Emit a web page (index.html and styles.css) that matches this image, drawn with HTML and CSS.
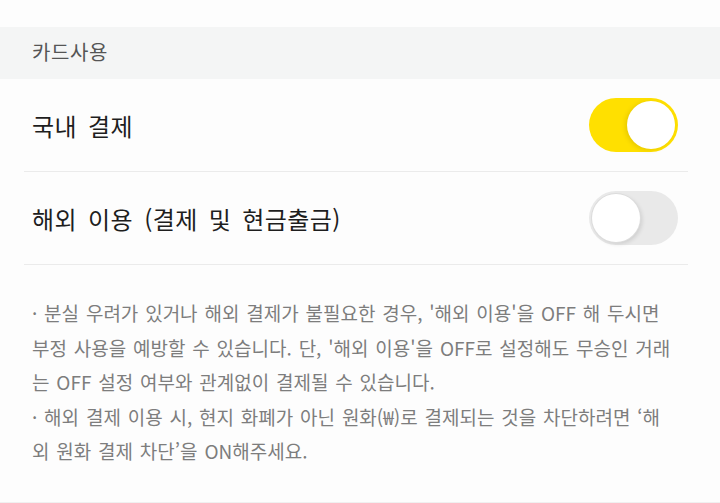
FILE: index.html
```html
<!DOCTYPE html>
<html lang="ko">
<head>
    <meta charset="UTF-8">
    <title>카드사용 설정</title>
    <link rel="stylesheet" href="styles.css">
</head>
<body>
    <div class="screen">
        <div class="section-title">카드사용</div>

        <ul class="setting-list">
            <li class="setting-row">
                <span class="setting-label">국내 결제</span>
                <span class="toggle is-on"><span class="knob"></span></span>
            </li>
            <li class="setting-row">
                <span class="setting-label">해외 이용 (결제 및 현금출금)</span>
                <span class="toggle"><span class="knob"></span></span>
            </li>
        </ul>

        <!-- 안내 문구 -->
        <div class="notice">
            <p>· 분실 우려가 있거나 해외 결제가 불필요한 경우, '해외 이용'을 OFF 해 두시면<br>부정 사용을 예방할 수 있습니다. 단, '해외 이용'을 OFF로 설정해도 무승인 거래<br>는 OFF 설정 여부와 관계없이 결제될 수 있습니다.</p>
            <p>· 해외 결제 이용 시, 현지 화폐가 아닌 원화(₩)로 결제되는 것을 차단하려면 ‘해<br>외 원화 결제 차단’을 ON해주세요.</p>
        </div>
    </div>
</body>
</html>
```

FILE: styles.css
```css
body {
    margin: 0;
    background: #fdfdfd;
    font-family: "Noto Sans CJK KR", "Noto Sans", sans-serif;
}

.screen {
    width: 720px;
    height: 503px;
    padding-top: 27px;
    box-sizing: border-box;
    border-bottom: 1px solid #f0f0f0;
    overflow: hidden;
}

.section-title {
    height: 52px;
    padding-left: 32px;
    background: #f4f5f5;
    color: #555;
    font-size: 20px;
    letter-spacing: 0.6px;
    line-height: 50px;
}

.setting-list {
    list-style: none;
    margin: 0 32px 0 24px;
    padding: 0;
}

.setting-row {
    display: flex;
    align-items: center;
    justify-content: space-between;
    height: 92px;
    padding: 0 10px 0 8px;
    border-bottom: 1px solid #ebebeb;
}

.setting-label {
    font-size: 24px;
    color: #1e1e1e;
    word-spacing: 4px;
    letter-spacing: 0.4px;
}

.toggle {
    display: flex;
    align-items: center;
    width: 89px;
    height: 54px;
    padding: 0 3px;
    box-sizing: border-box;
    border-radius: 27px;
    background: #e9e9e9;
}

.toggle .knob {
    width: 48px;
    height: 48px;
    border-radius: 50%;
    background: #fff;
    box-shadow: 0 0 0 1px #dcdcdc, 2px 2px 4px rgba(0, 0, 0, 0.12);
}

.toggle.is-on {
    justify-content: flex-end;
    background: #ffe000;
}

.toggle.is-on .knob {
    box-shadow: -2px 1px 4px rgba(120, 100, 0, 0.18);
}

.notice {
    padding: 31px 0 0 32px;
    color: #7d7d7d;
    font-size: 19px;
    line-height: 34.5px;
    word-spacing: 1.5px;
    white-space: nowrap;
}

.notice p {
    margin: 0;
}
```
